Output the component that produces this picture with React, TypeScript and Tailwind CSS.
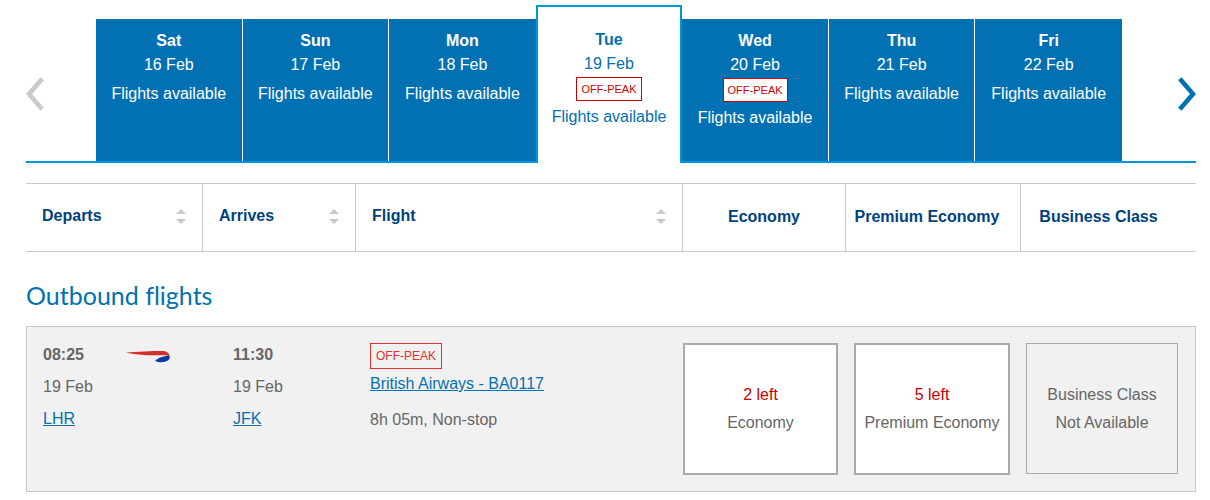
import { useState } from "react";
import clsx from "clsx";

const days = [
  { day: "Sat", date: "16 Feb" },
  { day: "Sun", date: "17 Feb" },
  { day: "Mon", date: "18 Feb" },
  { day: "Tue", date: "19 Feb", offPeak: true },
  { day: "Wed", date: "20 Feb", offPeak: true },
  { day: "Thu", date: "21 Feb" },
  { day: "Fri", date: "22 Feb" },
];

function Chevron({ direction }: { direction: "left" | "right" }) {
  return (
    <svg width="18" height="34" viewBox="0 0 18 34" fill="none" stroke="currentColor" strokeWidth="4.6">
      <path d={direction === "left" ? "M16.2 1.8 3 17l13.2 15.2" : "M1.8 1.8 15 17 1.8 32.2"} />
    </svg>
  );
}

function SortIcon() {
  return (
    <svg width="10" height="15" viewBox="0 0 10 15" fill="#c8c8c8" aria-hidden="true">
      <path d="M5 0l5 5H0zM5 15l5-5H0z" />
    </svg>
  );
}

function AirlineLogo() {
  return (
    <svg width="44" height="12" viewBox="0 0 44 12" role="img" aria-label="British Airways">
      <path d="M0 1.700C10 .7 26 .1 36 .1c4.500 0 7 1.800 7.700 5C42 4.300 40 4.200 37 4.200 22 4.700 9 3.300 0 1.700z" fill="#d0312d" />
      <path d="M29 9.800C32 7.300 36 5.600 41.500 4.800c1.200-.1 2 .1 2.200.7.5 2-1.200 3.800-4 5-3 1.200-7 1.100-10.700-.7z" fill="#0a38a8" />
    </svg>
  );
}

function DateStrip() {
  const [selected, setSelected] = useState("Tue");

  return (
    <nav aria-label="Choose a date" className="flex items-end border-b-2 border-[#0096db]">
      <button aria-label="Earlier dates" disabled className="flex w-[70px] shrink-0 self-end pb-[50px] text-[#cacaca]">
        <Chevron direction="left" />
      </button>

      <div className="grid flex-1 grid-cols-7 items-end">
        {days.map((item, i) => {
          const active = item.day === selected;
          const beforeActive = days[i + 1]?.day === selected;
          return (
            <button
              key={item.day}
              onClick={() => setSelected(item.day)}
              aria-pressed={active}
              className={clsx(
                "flex flex-col items-center whitespace-nowrap",
                active
                  ? "-mb-0.5 h-[158px] border-2 border-b-0 border-[#0096db] bg-white pt-[21px] text-[#0271b1]"
                  : "h-[142px] bg-[#0271b3] pt-[10px] text-white",
                !active && !beforeActive && i < days.length - 1 && "border-r border-white"
              )}
            >
              <span className="font-bold">{item.day}</span>
              <span>{item.date}</span>
              {item.offPeak && (
                <span className="mt-px h-6 border border-[#c00] bg-white px-1 text-[11px] leading-[22px] text-[#c00]">
                  OFF-PEAK
                </span>
              )}
              <span className={item.offPeak ? "mt-1" : "mt-[5px]"}>Flights available</span>
            </button>
          );
        })}
      </div>

      <button aria-label="Later dates" className="flex w-[74px] shrink-0 justify-end self-end pb-[50px] text-[#0271b1]">
        <Chevron direction="right" />
      </button>
    </nav>
  );
}

function Stop({ time, date, code }: { time: string; date: string; code: string }) {
  return (
    <div className="leading-8">
      <div className="font-bold">{time}</div>
      <div>{date}</div>
      <a href={"#" + code} className="text-[#0271b1] underline">{code}</a>
    </div>
  );
}

function FareButton({ left, cabin }: { left: number; cabin: string }) {
  return (
    <button className="h-[132px] w-full border-2 border-[#aaa] bg-white leading-7 whitespace-nowrap">
      <span className="block text-[#c00]">{left} left</span>
      <span className="block">{cabin}</span>
    </button>
  );
}

function FlightTable() {
  return (
    <table className="mt-5 w-full table-fixed border-separate border-spacing-0 text-left text-[#666]">
      <colgroup>
        <col className="w-[177px]" />
        <col className="w-[153px]" />
        <col />
        <col className="w-[163px]" />
        <col className="w-[175px]" />
        <col className="w-[175px]" />
      </colgroup>
      <thead className="text-[#00427f]">
        <tr>
          {["Departs", "Arrives", "Flight"].map((label) => (
            <th key={label} scope="col" className="h-[69px] border-y border-r border-[#c8c8c8] px-4 pt-5 align-top">
              <button className="flex w-full items-center justify-between font-bold">
                {label}
                <SortIcon />
              </button>
            </th>
          ))}
          <th scope="col" className="border-y border-r border-[#c8c8c8] pt-[21px] text-center align-top">Economy</th>
          <th scope="col" className="border-y border-r border-[#c8c8c8] pt-[21px] pr-3 text-center align-top">Premium Economy</th>
          <th scope="col" className="border-y border-[#c8c8c8] pt-[21px] pr-5 text-center align-top">Business Class</th>
        </tr>
      </thead>
      <tbody>
        <tr>
          <th colSpan={6} scope="rowgroup" className="h-[74px] pb-[15px] align-bottom font-normal">
            <h2 className="font-['Lato',sans-serif] text-[25px] leading-8 text-[#0271b1] [font-variant-ligatures:none]">
              Outbound flights
            </h2>
          </th>
        </tr>
        <tr className="bg-[#f1f1f1] align-top">
          <td className="border-y border-l border-[#c8c8c8] pt-3 pl-4">
            <div className="flex">
              <div className="w-[83px]">
                <Stop time="08:25" date="19 Feb" code="LHR" />
              </div>
              <div className="pt-3">
                <AirlineLogo />
              </div>
            </div>
          </td>
          <td className="border-y border-[#c8c8c8] pt-3 pl-[30px]">
            <Stop time="11:30" date="19 Feb" code="JFK" />
          </td>
          <td className="border-y border-[#c8c8c8] pt-4 pl-[14px]">
            <div className="flex flex-col items-start">
              <span className="h-[26px] border border-[#e4312b] px-[5px] text-xs leading-6 text-[#e4312b]">OFF-PEAK</span>
              <a href="#BA0117" className="mt-[3px] text-[#0271b1] underline">British Airways - BA0117</a>
              <span className="mt-3">8h 05m, Non-stop</span>
            </div>
          </td>
          <td className="border-y border-[#c8c8c8] py-4 pr-2">
            <FareButton left={2} cabin="Economy" />
          </td>
          <td className="border-y border-[#c8c8c8] py-4 pr-[11px] pl-2">
            <FareButton left={5} cabin="Premium Economy" />
          </td>
          <td className="border-y border-r border-[#c8c8c8] py-4 pr-[17px] pl-[5px]">
            <div className="flex h-[131px] flex-col justify-center border border-[#aaa] text-center leading-7">
              <span>Business Class</span>
              <span>Not Available</span>
            </div>
          </td>
        </tr>
      </tbody>
    </table>
  );
}

export default function App() {
  return (
    <main className="bg-white pt-[5px] pr-[14px] pb-2 pl-[26px] font-['Liberation_Sans',Arial,sans-serif] text-base">
      <DateStrip />
      <FlightTable />
    </main>
  );
}
